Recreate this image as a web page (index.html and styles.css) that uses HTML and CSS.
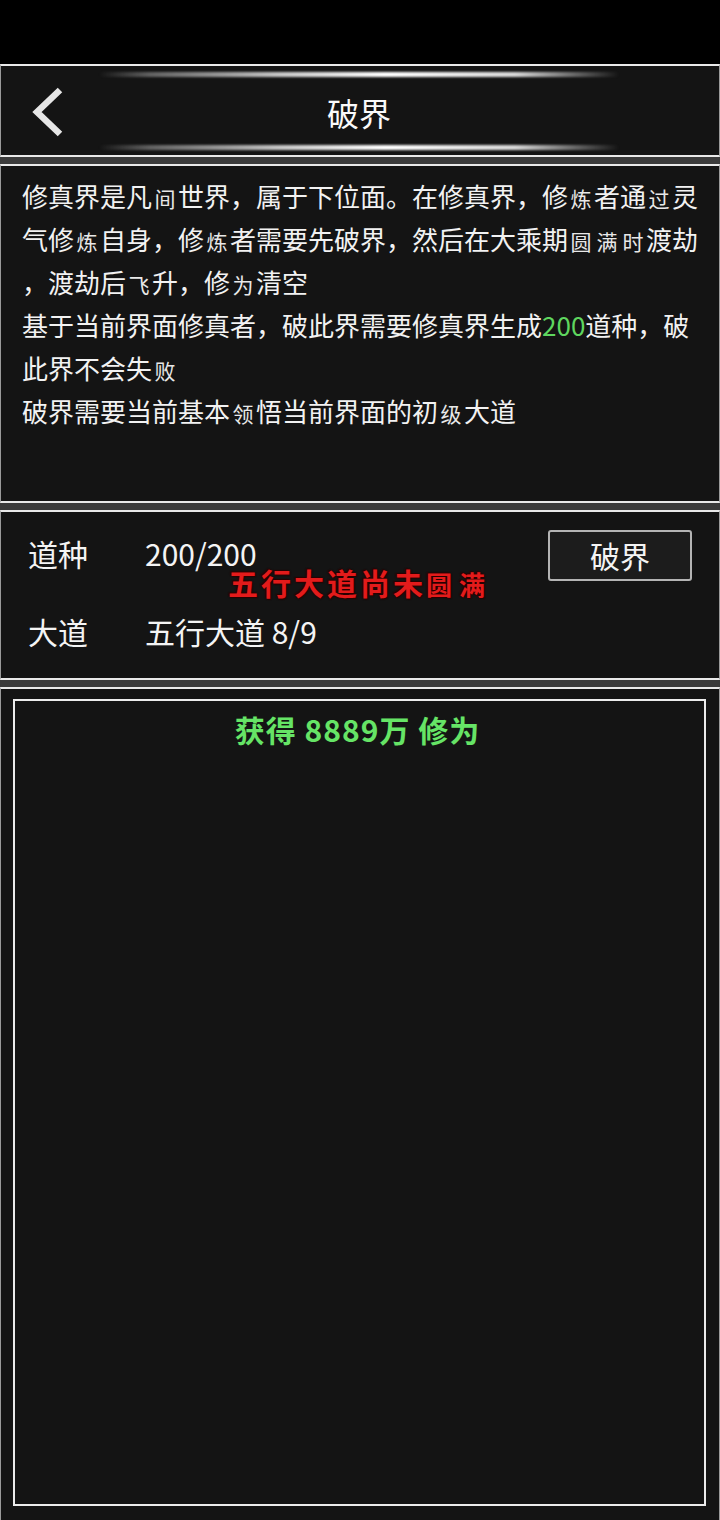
FILE: index.html
```html
<!DOCTYPE html>
<html lang="zh">
<head>
<meta charset="utf-8">
<title>破界</title>
<link rel="stylesheet" href="styles.css">
</head>
<body>
<div class="screen">
  <div class="statusbar"></div>

  <div class="panel header">
    <div class="back-cell">
      <svg class="back" width="36" height="52" viewBox="0 0 36 52">
        <polyline points="31,4 8,26 31,48" fill="none" stroke="#e6e6e6" stroke-width="6.5" stroke-linecap="butt" stroke-linejoin="miter"/>
      </svg>
    </div>
    <div class="title-cell">
      <div class="glow-line"></div>
      <div class="title">破界</div>
      <div class="glow-line"></div>
    </div>
    <div class="spacer"></div>
  </div>

  <div class="panel desc">
    <div class="line">修真界是凡<span class="fb">间</span>世界，属于下位面。在修真界，修<span class="fb">炼</span>者通<span class="fb">过</span>灵</div>
    <div class="line">气修<span class="fb">炼</span>自身，修<span class="fb">炼</span>者需要先破界，然后在大乘期<span class="fb">圆满时</span>渡劫</div>
    <div class="line">，渡劫后<span class="fb">飞</span>升，修<span class="fb">为</span>清空</div>
    <div class="line">基于当前界面修真者，破此界需要修真界生成<span class="num">200</span>道种，破</div>
    <div class="line">此界不会失<span class="fb">败</span></div>
    <div class="line">破界需要当前基本<span class="fb">领</span>悟当前界面的初<span class="fb">级</span>大道</div>
  </div>

  <div class="panel info">
    <div class="rows">
      <div class="label">道种</div>
      <div class="value">200/200</div>
      <div class="label">大道</div>
      <div class="value">五行大道 8/9</div>
    </div>
    <button class="btn">破界</button>
    <div class="toast">五行大道尚未<span class="tfb">圆满</span></div>
  </div>

  <div class="panel log">
    <div class="log-box">
      <div class="gain">获得 8889万 修为</div>
    </div>
  </div>
</div>
</body>
</html>
```

FILE: styles.css
```css
* { box-sizing: border-box; }
html, body { margin: 0; padding: 0; }
body {
  background: #000;
  font-family: "Noto Sans CJK SC", "Noto Sans", sans-serif;
  color: #f2f2f2;
}
.screen {
  width: 720px;
  height: 1520px;
  display: flex;
  flex-direction: column;
  gap: 7px;
  background: #3b3b3b;
  overflow: hidden;
}
.statusbar {
  height: 64px;
  background: #000;
  margin-bottom: -7px;
}
.panel {
  background: #141414;
  border-top: 2px solid #e9e9e9;
  border-bottom: 2px solid #e9e9e9;
  border-left: 1px solid #9a9a9a;
  border-right: 1px solid #9a9a9a;
}

/* header */
.header {
  height: 93px;
  display: grid;
  grid-template-columns: 98px 520px 1fr;
}
.back-cell {
  display: flex;
  align-items: center;
  padding-left: 28px;
}
.back { display: block; margin-top: 2px; }
.title-cell {
  display: flex;
  flex-direction: column;
}
.glow-line {
  height: 5px;
  margin-top: 6px;
  background: linear-gradient(to right, rgba(255,255,255,0) 0%, rgba(150,150,150,0.6) 10%, #c8c8c8 35%, #ffffff 55%, #d8d8d8 80%, rgba(120,120,120,0.5) 95%, rgba(255,255,255,0) 100%);
  filter: blur(0.8px);
  border-radius: 3px;
}
.glow-line:last-child { margin-top: 0; margin-bottom: 5px; }
.title {
  flex: 1;
  display: flex;
  align-items: center;
  justify-content: center;
  font-size: 32px;
  color: #fafafa;
  padding-top: 1px;
}

/* description */
.desc {
  height: 339px;
  padding: 8px 10px 0 21px;
  font-size: 26px;
  line-height: 43px;
}
.line { white-space: nowrap; height: 43px; }
.fb {
  font-size: 21px;
  line-height: 1;
  letter-spacing: 5px;
  padding-left: 2.5px;
  margin-right: -2.5px;
  color: #e8e8e8;
}
.num { color: #5fd65f; }

/* info */
.info {
  position: relative;
  height: 170px;
  display: flex;
  justify-content: space-between;
  align-items: flex-start;
  padding: 18px 27px 0 27px;
}
.rows {
  display: grid;
  grid-template-columns: 117px auto;
  row-gap: 38px;
  margin-top: 3px;
  font-size: 30px;
  line-height: 40px;
  color: #f4f4f4;
}
.btn {
  width: 144px;
  height: 51px;
  border: 2px solid #b4b4b4;
  border-radius: 3px;
  background: #1c1c1c;
  color: #f4f4f4;
  font-family: "Noto Sans CJK SC", "Noto Sans", sans-serif;
  font-size: 30px;
  padding: 0;
  line-height: 45px;
}
.toast {
  position: absolute;
  left: 0;
  right: 0;
  top: 50px;
  text-align: center;
  font-size: 30px;
  font-weight: 700;
  line-height: 40px;
  letter-spacing: 3px;
  color: #e31b1b;
  text-shadow: 0 0 2px #200000, 1px 1px 1px #300000, -1px -1px 1px #300000;
}
.tfb { font-size: 26px; line-height: 1; letter-spacing: 7px; }

/* log */
.log {
  flex: 1;
  border-bottom: none;
  padding: 10px 13px 14px 12px;
  display: flex;
}
.log-box {
  flex: 1;
  border: 2px solid #ececec;
  padding-top: 8px;
}
.gain {
  text-align: center;
  font-size: 30px;
  font-weight: 700;
  line-height: 40px;
  letter-spacing: 1px;
  color: #66e466;
  margin-left: -4px;
}
```
